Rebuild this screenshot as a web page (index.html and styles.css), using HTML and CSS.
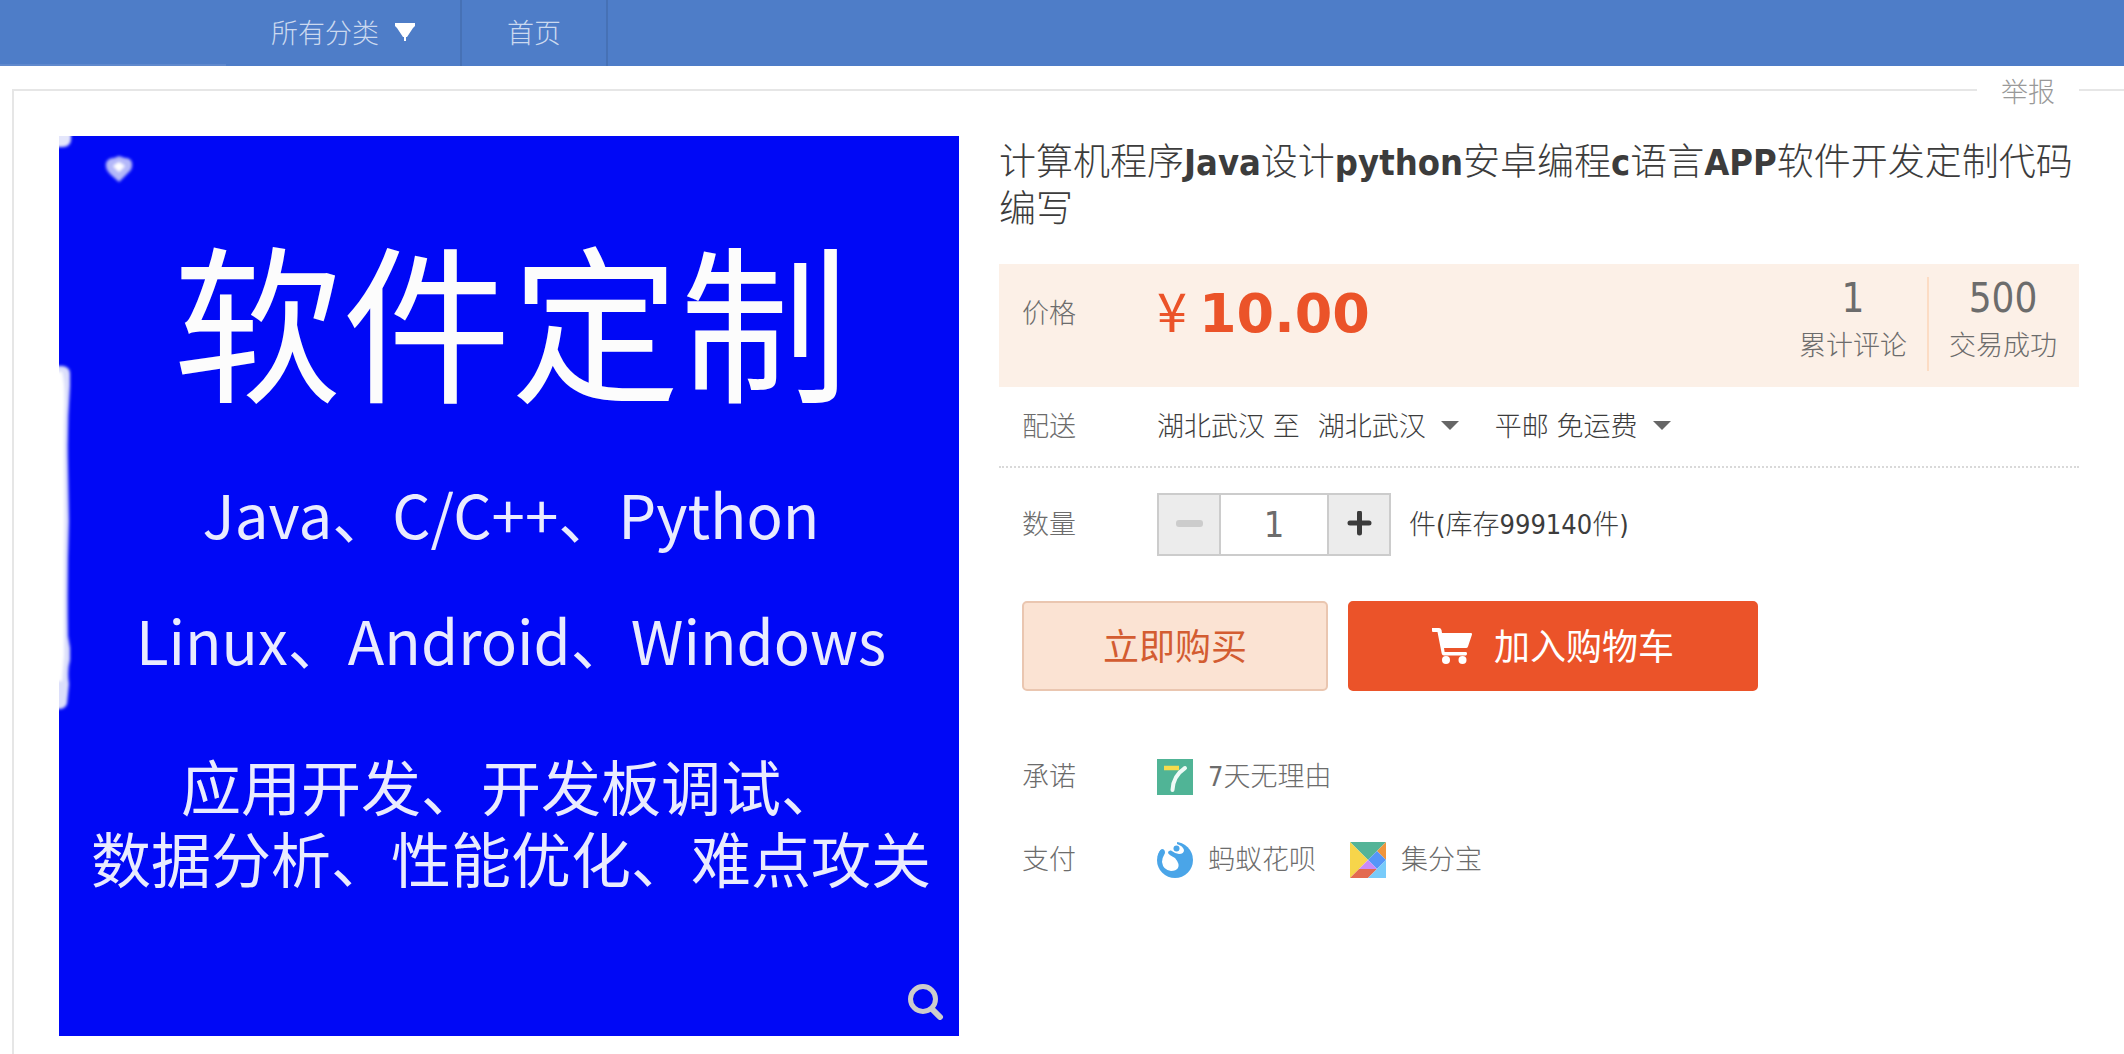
FILE: index.html
```html
<!DOCTYPE html>
<html lang="zh-CN">
<head>
    <meta charset="UTF-8">
    <meta name="viewport" content="width=device-width, initial-scale=1.0">
    <title>计算机程序Java设计python安卓编程c语言APP软件开发定制代码编写</title>
    <link rel="stylesheet" href="styles.css">
</head>
<body>
    <nav class="shop-nav">
        <div class="nav-side"></div>
        <a class="nav-item" href="#">所有分类
            <svg class="nav-arrow" viewBox="0 0 20 18"><path d="M0 0h20v3l-2 2-6 9h-1v4h-2v-4h-1l-6-9-2-2z" fill="#fff"/></svg>
        </a>
        <a class="nav-item nav-home" href="#">首页</a>
    </nav>

    <main class="card">
        <a class="report" href="#">举报</a>

        <div class="picture">
            <svg class="marks" viewBox="0 0 90 600">
                <defs>
                    <filter id="soft" x="-50%" y="-10%" width="200%" height="120%"><feGaussianBlur stdDeviation="1.5"/></filter>
                </defs>
                <g filter="url(#soft)">
                    <path d="M-5 -5H12V4Q11 11 4 11H-5z" fill="#e4e6fb"/>
                    <path d="M47 27Q49 22 55 22L60 20L66 22Q72 22 73 27Q74 33 69 37L60 46L51 38Q46 33 47 27z" fill="#b4b8f9"/>
                    <path d="M54 30L60 26L66 30L60 36z" fill="#fff"/>
                    <path d="M-5 230H4Q11 231 11 238V250Q8 290 9 330L10 385Q8 440 9 500L11 512V524Q8 535 10 548Q9 558 8 568Q6 573 0 573H-5z" fill="#dcdffb"/>
                    <path d="M-5 236H3Q7 250 5 290V330Q6 380 5 420V520L3 545H-5z" fill="#fff"/>
                </g>
            </svg>
            <p class="pic-title">软件定制</p>
            <p class="pic-line">Java、C/C++、Python</p>
            <p class="pic-line">Linux、Android、Windows</p>
            <p class="pic-text">应用开发、开发板调试、<br>数据分析、性能优化、难点攻关</p>
            <svg class="zoom-icon" viewBox="0 0 36 36"><circle cx="15" cy="15" r="12.5" fill="none" stroke="#ccc" stroke-width="5"/><path d="M24 25l8 8" stroke="#ccc" stroke-width="6" stroke-linecap="round"/></svg>
        </div>

        <div class="detail">
            <h1 class="title">计算机程序<b>Java</b>设计<b>python</b>安卓编程<b>c</b>语言<b>APP</b>软件开发定制代码编写</h1>

            <div class="row price-row">
                <span class="label">价格</span>
                <div class="price"><span class="yen">¥</span><strong>10.00</strong></div>
                <div class="stats">
                    <div class="stat"><span class="num">1</span>累计评论</div>
                    <div class="stat"><span class="num">500</span>交易成功</div>
                </div>
            </div>

            <div class="row delivery-row">
                <span class="label">配送</span>
                <label for="city">湖北武汉 至</label>
                <span class="pick">
                    <select id="city"><option>湖北武汉</option></select>
                </span>
                <span class="pick">
                    <select aria-label="快递"><option>平邮 免运费</option></select>
                </span>
            </div>

            <div class="row amount-row">
                <label class="label" for="amount">数量</label>
                <div class="stepper">
                    <button type="button" aria-label="减少" disabled>
                        <svg width="27" height="27" viewBox="0 0 27 27"><rect y="9" width="27" height="7" rx="3" fill="#ccc"/></svg>
                    </button>
                    <input id="amount" type="text" value="1">
                    <button type="button" aria-label="增加">
                        <svg width="27" height="27" viewBox="0 0 27 27"><path d="M13.500 2v20M4 12h19" stroke="#3c3c3c" stroke-width="5" stroke-linecap="round"/></svg>
                    </button>
                </div>
                <span class="stock">件(库存999140件)</span>
            </div>

            <div class="actions">
                <button type="button" class="buy">立即购买</button>
                <button type="button" class="cart">
                    <svg width="40" height="36" viewBox="0 0 40 36" fill="#fff"><path d="M0 0h7q2 0 2.500 2l.5 3h29q1.500 0 1 1.500l-4 12q-.5 1.500-2 1.500H12l.6 4H34q1 0 1 1.500t-1 2H12q-2 0-2.300-2L5.500 4H1Q0 4 0 3z"/><circle cx="14" cy="32" r="4"/><circle cx="30.500" cy="32" r="4"/></svg>
                    <span>加入购物车</span>
                </button>
            </div>

            <div class="row service-row">
                <span class="label">承诺</span>
                <span class="service">
                    <svg width="36" height="36" viewBox="0 0 36 36"><rect width="36" height="36" fill="#50b496"/><path d="M7 9h15" stroke="#f7dc4c" stroke-width="4.500"/><path d="M28 9Q16 17 15.500 31" fill="none" stroke="#eefaf6" stroke-width="4" stroke-linecap="round"/></svg>
                    7天无理由
                </span>
            </div>

            <div class="row service-row">
                <span class="label">支付</span>
                <span class="service">
                    <svg width="36" height="36" viewBox="0 0 36 36"><circle cx="18" cy="18" r="18" fill="#4aa5e8"/><path d="M0 0H20V2Q26 4 27 8Q27 12 22 12Q17 11 14 8.500Q11 8 11 11Q12 13 18 16Q23 22 21 26Q19 29 14 29Q6 28 5 20Q5 16 8 11Q8 7 5 7Q2 8 0 14z" fill="#fff"/><circle cx="19.500" cy="6.500" r="3" fill="#4aa5e8"/></svg>
                    蚂蚁花呗
                </span>
                <span class="service">
                    <svg width="36" height="36" viewBox="0 0 36 36"><path d="M0 0h36L18 18z" fill="#54b498"/><path d="M0 0l18 18L0 36z" fill="#f7d54a"/><path d="M36 0v18l-9-9z" fill="#f0953c"/><path d="M27 9l9 9-9 9-9-9z" fill="#5596f8"/><path d="M18 18l9 9H9z" fill="#c98bf8"/><path d="M9 27h18l-9 9H0z" fill="#e36a50"/><path d="M36 18v18H18z" fill="#78cbfa"/></svg>
                    集分宝
                </span>
            </div>
        </div>
    </main>
</body>
</html>
```
FILE: styles.css
```css
* {
    box-sizing: border-box;
}

body {
    margin: 0;
    background: #fff;
    color: #6c6c6c;
    font: 300 27px/36px "DejaVu Sans Condensed", "Noto Sans CJK SC", sans-serif;
}

a {
    color: inherit;
    text-decoration: none;
}

button, input, select {
    font: inherit;
    color: inherit;
    margin: 0;
    padding: 0;
}

.shop-nav {
    display: flex;
    height: 66px;
    background: #4e7dc8;
    color: #cbd9ef;
}

.nav-side {
    width: 226px;
    border-bottom: 2px solid #6089cd;
}

.nav-item {
    display: flex;
    align-items: center;
    gap: 16px;
    padding: 2px 45px 0;
    border-right: 2px solid #4671b5;
}

.nav-arrow {
    width: 20px;
    height: 18px;
    margin-bottom: 4px;
}

.card {
    position: relative;
    display: flex;
    gap: 40px;
    margin: 23px 0 0 12px;
    padding: 45px 45px 18px;
    border-left: 2px solid #e6e6e6;
    border-top: 2px solid #e6e6e6;
}

/* sits on top of the card border */
.report {
    position: absolute;
    top: -16px;
    right: 45px;
    padding: 0 24px;
    background: #fff;
    color: #999;
}

.picture {
    position: relative;
    flex: none;
    width: 900px;
    height: 900px;
    padding: 96px 0 0 4px;
    background: #0008f6;
    color: #e9ebfe;
    font-family: "Noto Sans CJK SC", sans-serif;
    font-weight: 400;
    text-align: center;
    overflow: hidden;
}

.picture p {
    margin: 0;
}

.pic-title {
    padding-bottom: 48px;
    color: #fcfcfc;
    font-size: 169px;
    line-height: 170px;
}

.pic-line {
    font-size: 60px;
    line-height: 126px;
}

.pic-text {
    padding-top: 47px;
    font-size: 60px;
    line-height: 72px;
}

.marks {
    position: absolute;
    left: 0;
    top: 0;
    width: 90px;
    height: 600px;
}

.zoom-icon {
    position: absolute;
    right: 15px;
    bottom: 16px;
    width: 36px;
    height: 36px;
}

.detail {
    flex: 1;
    min-width: 0;
}

.title {
    margin: 0 0 31px;
    padding-top: 3px;
    color: #3c3c3c;
    font-size: 37px;
    font-weight: 300;
    line-height: 47px;
}

.title b {
    font-size: 36px;
    font-weight: 700;
}

.row {
    display: flex;
    align-items: center;
    padding-left: 23px;
}

.label {
    width: 135px;
}

.price-row {
    height: 123px;
    padding-bottom: 24px;
    background: #fcf0e7;
}

.price {
    padding-bottom: 5px;
    color: #eb5329;
    font-family: "DejaVu Sans", sans-serif;
    font-size: 54px;
    line-height: 80px;
}

.price strong {
    font-weight: 700;
}

.yen {
    margin-right: 12px;
    font-family: "Noto Sans CJK SC", sans-serif;
    font-weight: 400;
}

.stats {
    display: flex;
    align-self: flex-start;
    margin: 13px 2px 0 auto;
}

.stat {
    display: flex;
    flex-direction: column;
    align-items: center;
    height: 94px;
    padding: 0 20px;
}

.stat + .stat {
    border-left: 2px solid #fcdcc4;
}

.num {
    margin-bottom: 9px;
    font-size: 40px;
    line-height: 42px;
}

.delivery-row {
    height: 81px;
    border-bottom: 2px dotted #d9d9d9;
    color: #3c3c3c;
}

.delivery-row .label {
    color: #6c6c6c;
}

.pick {
    position: relative;
    margin: 0 18px;
}

.pick select {
    appearance: none;
    padding-right: 33px;
    border: none;
    background: none;
}

.pick::after {
    content: "";
    position: absolute;
    right: 0;
    top: 12px;
    border: 9px solid transparent;
    border-top-color: #666;
    border-bottom: none;
    pointer-events: none;
}

.amount-row {
    padding-top: 25px;
}

.stepper {
    display: flex;
    height: 63px;
    margin-right: 18px;
    border: 2px solid #ccc;
}

.stepper button {
    display: flex;
    align-items: center;
    justify-content: center;
    width: 60px;
    border: none;
    background: #ececec;
}

.stepper input {
    width: 110px;
    border: solid #ccc;
    border-width: 0 2px;
    font-size: 36px;
    text-align: center;
}

.stock {
    color: #3c3c3c;
}

.actions {
    display: flex;
    gap: 20px;
    margin: 45px 0 68px;
    padding-left: 23px;
}

.actions button {
    display: flex;
    align-items: center;
    justify-content: center;
    gap: 22px;
    height: 90px;
    border: 2px solid #eb5329;
    border-radius: 5px;
    font-size: 36px;
    font-weight: 400;
}

.actions .buy {
    width: 306px;
    padding-top: 4px;
    border-color: #eac6b0;
    background: #fbe3d3;
    color: #d35c31;
}

.actions .cart {
    width: 410px;
    background: #eb5329;
    color: #fff;
}

.cart span {
    padding-top: 4px;
}

.service-row {
    margin-bottom: 47px;
}

.service {
    display: flex;
    align-items: center;
    gap: 15px;
    margin-right: 34px;
}
```
